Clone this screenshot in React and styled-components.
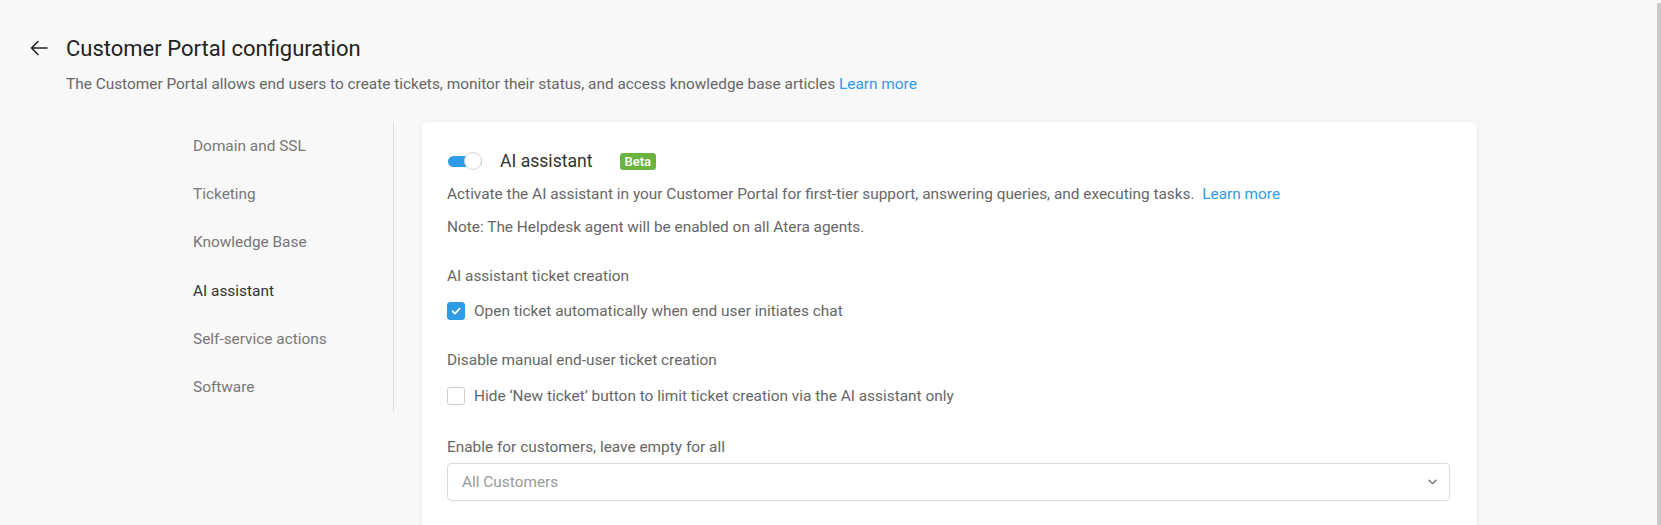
import styled, { createGlobalStyle } from "styled-components";

const GlobalStyle = createGlobalStyle`
    body {
        margin: 0;
        background: #f8f8f8;
        font-family: Roboto, "Liberation Sans", sans-serif;
    }
`;

const navItems = [
    "Domain and SSL",
    "Ticketing",
    "Knowledge Base",
    "AI assistant",
    "Self-service actions",
    "Software",
];

const BackArrow = () => (
    <svg width="18" height="16" viewBox="0 0 18 16" fill="none">
        <path d="M17 8H1.5M8 1.5L1.5 8L8 14.5" stroke="#222" strokeWidth="1.6" strokeLinecap="round" strokeLinejoin="round" />
    </svg>
);

const Check = () => (
    <svg width="12" height="12" viewBox="0 0 12 12" fill="none">
        <path d="M2.5 6.2L5 8.6L9.6 3.6" stroke="#fff" strokeWidth="1.8" strokeLinecap="round" strokeLinejoin="round" />
    </svg>
);

const Chevron = () => (
    <svg width="9" height="6" viewBox="0 0 9 6" fill="none">
        <path d="M1 1.2L4.5 4.6L8 1.2" stroke="#666" strokeWidth="1.3" strokeLinecap="round" strokeLinejoin="round" />
    </svg>
);

const CheckRow = ({ checked, children }) => (
    <CheckLine>
        <Box $checked={checked}>{checked && <Check />}</Box>
        <span>{children}</span>
    </CheckLine>
);

export default function App() {
    return (
        <Page>
            <GlobalStyle />
            <Main>
                <Header>
                    <TitleRow>
                        <BackArrow />
                        <Title>Customer Portal configuration</Title>
                    </TitleRow>
                    <Subtitle>
                        The Customer Portal allows end users to create tickets, monitor their status, and access knowledge base articles <Link>Learn more</Link>
                    </Subtitle>
                </Header>
                <Body>
                    <Sidebar>
                        {navItems.map((item) => (
                            <NavItem key={item} $active={item === "AI assistant"}>{item}</NavItem>
                        ))}
                    </Sidebar>
                    <Card>
                        <CardHead>
                            <Toggle><Knob /></Toggle>
                            <CardTitle>AI assistant</CardTitle>
                            <Badge>Beta</Badge>
                        </CardHead>
                        <Text>
                            Activate the AI assistant in your Customer Portal for first-tier support, answering queries, and executing tasks.&nbsp; <Link>Learn more</Link>
                        </Text>
                        <Note>Note: The Helpdesk agent will be enabled on all Atera agents.</Note>
                        <Section>
                            <Label>AI assistant ticket creation</Label>
                            <CheckRow checked>Open ticket automatically when end user initiates chat</CheckRow>
                        </Section>
                        <Section $wide>
                            <Label>Disable manual end-user ticket creation</Label>
                            <CheckRow>Hide ‘New ticket’ button to limit ticket creation via the AI assistant only</CheckRow>
                        </Section>
                        <Section $tight>
                            <Label>Enable for customers, leave empty for all</Label>
                            <Select>
                                <span>All Customers</span>
                                <Chevron />
                            </Select>
                        </Section>
                    </Card>
                </Body>
            </Main>
            <ScrollTrack><ScrollThumb /></ScrollTrack>
        </Page>
    );
}

const Page = styled.div`
    display: flex;
    height: 525px;
    overflow: hidden;
`;
const Main = styled.div`
    flex: 1;
`;
const ScrollTrack = styled.div`
    width: 4px;
    padding-top: 3px;
    display: flex;
`;
const ScrollThumb = styled.div`
    flex: 1;
    background: #c8c8c8;
`;
const Header = styled.header`
    padding: 36px 0 0 30px;
`;
const TitleRow = styled.div`
    display: flex;
    align-items: center;
    gap: 18px;
    height: 24px;
`;
const Title = styled.h1`
    margin: 0;
    font-size: 22px;
    font-weight: 400;
    color: #222;
`;
const Subtitle = styled.p`
    margin: 14px 0 0 36px;
    font-size: 15.4px;
    line-height: 20px;
    color: #666;
`;
const Link = styled.a`
    color: #2d9be6;
    cursor: pointer;
`;
const Body = styled.div`
    display: flex;
    align-items: flex-start;
    margin-top: 28px;
    padding-left: 193px;
`;
const Sidebar = styled.nav`
    width: 200px;
    padding: 14px 0 15px;
    border-right: 1px solid #ddd;
    display: flex;
    flex-direction: column;
    gap: 28.2px;
`;
const NavItem = styled.div`
    font-size: 15.4px;
    line-height: 20px;
    color: ${(p) => (p.$active ? "#333" : "#777")};
    cursor: pointer;
`;
const Card = styled.section`
    width: 1055px;
    box-sizing: border-box;
    margin-left: 28px;
    padding: 27px 27px 60px 25px;
    background: #fff;
    border-radius: 6px;
    box-shadow: 0 1px 6px rgba(0, 0, 0, 0.07);
`;
const CardHead = styled.div`
    display: flex;
    align-items: center;
    height: 24px;
`;
const Toggle = styled.div`
    position: relative;
    width: 34px;
    height: 11px;
    margin-left: 1px;
    border-radius: 6px;
    background: #2d9be6;
`;
const Knob = styled.span`
    position: absolute;
    right: 0;
    top: -4px;
    width: 18px;
    height: 18px;
    box-sizing: border-box;
    border-radius: 50%;
    background: #fff;
    border: 1px solid #d6d6d6;
`;
const CardTitle = styled.span`
    margin-left: 18px;
    font-size: 17.6px;
    color: #333;
`;
const Badge = styled.span`
    margin-left: 27px;
    padding: 0 5px;
    height: 17px;
    line-height: 17px;
    border-radius: 3px;
    background: #6db33f;
    color: #fff;
    font-size: 13px;
    font-weight: 500;
`;
const Text = styled.p`
    margin: 11px 0 0;
    font-size: 15.4px;
    line-height: 20px;
    color: #666;
`;
const Note = styled(Text)`
    margin-top: 13px;
`;
const Section = styled.div`
    margin-top: ${(p) => (p.$tight ? "31px" : "29px")};
    display: flex;
    flex-direction: column;
    gap: ${(p) => (p.$tight ? "6px" : p.$wide ? "16px" : "15px")};
`;
const Label = styled.div`
    font-size: 15.4px;
    line-height: 20px;
    color: #666;
`;
const CheckLine = styled.label`
    display: flex;
    align-items: center;
    gap: 9px;
    height: 20px;
    font-size: 15.4px;
    color: #666;
`;
const Box = styled.span`
    width: 18px;
    height: 18px;
    box-sizing: border-box;
    border-radius: 3px;
    display: flex;
    align-items: center;
    justify-content: center;
    background: ${(p) => (p.$checked ? "#2d9be6" : "#fff")};
    border: 1px solid ${(p) => (p.$checked ? "#2d9be6" : "#cfcfcf")};
`;
const Select = styled.div`
    height: 38px;
    box-sizing: border-box;
    border: 1px solid #dcdcdc;
    border-radius: 4px;
    display: flex;
    align-items: center;
    justify-content: space-between;
    padding: 0 12px 0 14px;
    font-size: 15.4px;
    color: #999;
`;
